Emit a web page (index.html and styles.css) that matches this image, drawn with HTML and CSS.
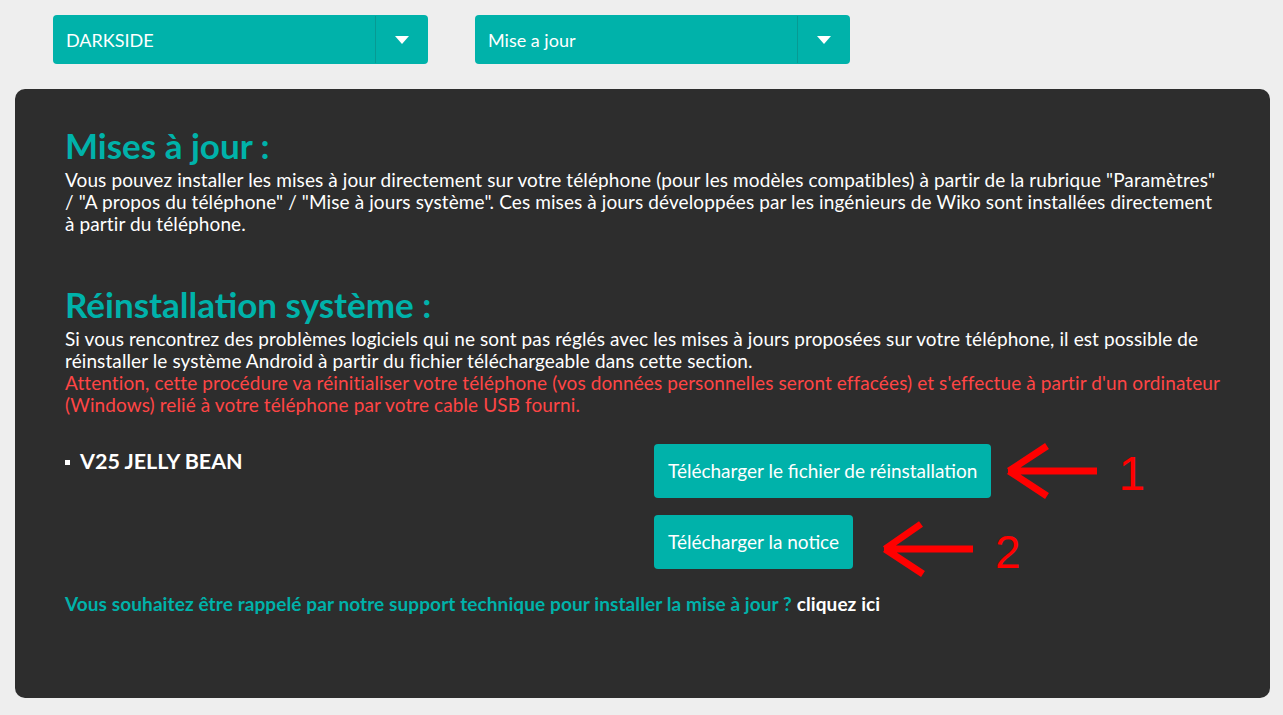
FILE: index.html
```html
<!DOCTYPE html>
<html lang="fr">
<head>
    <meta charset="UTF-8">
    <meta name="viewport" content="width=device-width, initial-scale=1.0">
    <title>Mises à jour</title>
    <link rel="stylesheet" href="styles.css">
</head>
<body>

    <div id="filters">
        <div class="select">
            <span class="select-label">DARKSIDE</span>
            <span class="select-arrow"></span>
        </div>
        <div class="select">
            <span class="select-label">Mise a jour</span>
            <span class="select-arrow"></span>
        </div>
    </div>

    <div id="panel">
        <h2 class="title">Mises à jour :</h2>
        <p class="text">Vous pouvez installer les mises à jour directement sur votre téléphone (pour les modèles compatibles) à partir de la rubrique "Paramètres" / "A propos du téléphone" / "Mise à jours système". Ces mises à jours développées par les ingénieurs de Wiko sont installées directement à partir du téléphone.</p>

        <h2 class="title second">Réinstallation système :</h2>
        <p class="text">Si vous rencontrez des problèmes logiciels qui ne sont pas réglés avec les mises à jours proposées sur votre téléphone, il est possible de réinstaller le système Android à partir du fichier téléchargeable dans cette section.<br>
        <span class="warning">Attention, cette procédure va réinitialiser votre téléphone (vos données personnelles seront effacées) et s'effectue à partir d'un ordinateur (Windows) relié à votre téléphone par votre cable USB fourni.</span></p>

        <div class="download">
            <div class="model"><span class="bullet"></span>V25 JELLY BEAN</div>
            <div class="download-buttons">
                <div class="row">
                    <a class="btn" href="#">Télécharger le fichier de réinstallation</a>
                    <svg class="arrow first" width="92" height="58" viewBox="0 0 92 58">
                        <path d="M3 29 H92 M4 29 L42 4 M4 29 L42 54" stroke="#ff0000" stroke-width="7" fill="none"/>
                    </svg>
                    <span class="num">1</span>
                </div>
                <div class="row">
                    <a class="btn" href="#">Télécharger la notice</a>
                    <svg class="arrow second-arrow" width="92" height="58" viewBox="0 0 92 58">
                        <path d="M3 29 H92 M4 29 L40 4 M4 29 L42 54" stroke="#ff0000" stroke-width="7" fill="none"/>
                    </svg>
                    <span class="num">2</span>
                </div>
            </div>
        </div>

        <p class="callback">Vous souhaitez être rappelé par notre support technique pour installer la mise à jour ? <a href="#">cliquez ici</a></p>
    </div>

</body>
</html>
```

FILE: styles.css
```css
body {
    font-family: Lato, "Open Sans", sans-serif;
    margin: 0;
    padding: 15px 13px 17px 15px;
    background-color: #eeeeee;
}

#filters {
    display: flex;
    gap: 47px;
    padding-left: 38px;
}

.select {
    width: 375px;
    height: 49px;
    background-color: #00b2aa;
    border-radius: 4px;
    display: flex;
    align-items: center;
    color: #fff;
    font-size: 18px;
}

.select-label {
    flex: 1;
    padding-left: 13px;
}

.select-arrow {
    width: 52px;
    height: 47px;
    border-left: 1px solid #079a93;
    display: flex;
    align-items: center;
    justify-content: center;
}

.select-arrow::after {
    content: "";
    border-left: 7px solid transparent;
    border-right: 7px solid transparent;
    border-top: 8px solid #fff;
}

#panel {
    margin-top: 25px;
    background-color: #2d2d2d;
    border-radius: 10px;
    padding: 36px 50px 83px 50px;
    color: #fff;
}

.title {
    color: #00b2aa;
    font-size: 35px;
    font-weight: 700;
    margin: 0;
    line-height: 40px;
}

.title.second {
    margin-top: 49px;
}

.text {
    font-size: 19px;
    line-height: 22px;
    letter-spacing: 0.1px;
    margin: 4px 0 0 0;
}

.warning {
    color: #ff4545;
}

.download {
    display: grid;
    grid-template-columns: 589px 1fr;
    margin-top: 28px;
}

.model {
    font-size: 21.5px;
    font-weight: 700;
    display: flex;
    align-items: center;
    gap: 10px;
    margin-top: 4px;
    align-self: start;
}

.bullet {
    width: 5px;
    height: 5px;
    background-color: #fff;
    margin-top: 3px;
}

.download-buttons {
    display: flex;
    flex-direction: column;
    gap: 17px;
}

.row {
    display: flex;
    align-items: center;
    height: 54px;
}

.btn {
    background-color: #00b2aa;
    color: #fff;
    text-decoration: none;
    font-size: 19px;
    height: 54px;
    line-height: 54px;
    padding: 0 14px;
    border-radius: 4px;
}

.arrow.first {
    margin-left: 14px;
}

.arrow.second-arrow {
    margin-left: 28px;
    margin-top: 14px;
}

.num {
    color: #ff0000;
    font-family: "Liberation Sans", Arial, sans-serif;
    font-size: 48px;
    margin-left: 21px;
    margin-top: 4px;
}

.row + .row .num {
    margin-left: 22px;
    margin-top: 20px;
    font-size: 46px;
}

.callback {
    margin: 23px 0 0 0;
    color: #00b2aa;
    font-size: 19px;
    font-weight: 700;
    letter-spacing: 0.1px;
}

.callback a {
    color: #fff;
    text-decoration: none;
}
```
